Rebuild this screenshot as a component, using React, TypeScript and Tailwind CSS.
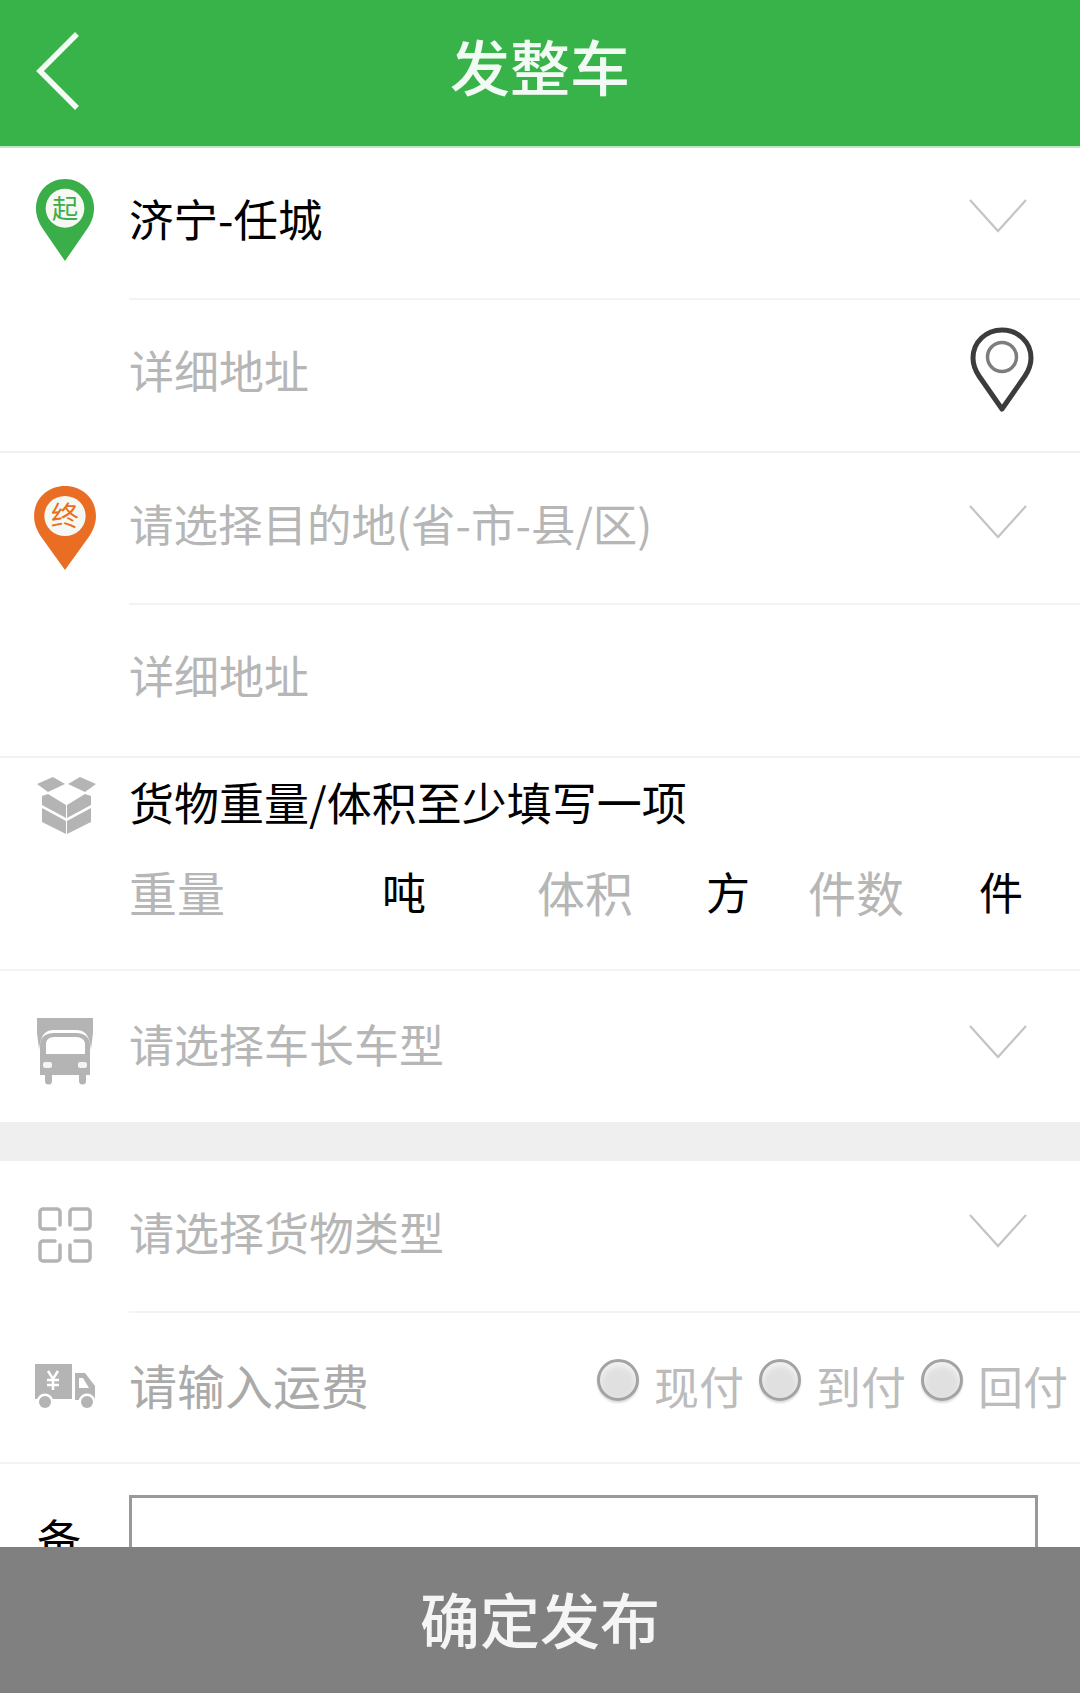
import type { ReactNode } from "react";

const FONT = "font-['Noto_Sans_CJK_SC','Noto_Sans',sans-serif]";

function Chevron() {
  return (
    <svg width="60" height="36" viewBox="0 0 60 36" className="shrink-0" fill="none">
      <path d="M2 2 L30 33 L58 2" stroke="#c4c4c4" strokeWidth="2.2" />
    </svg>
  );
}

function OriginPin({ color, label, wide = false }: { color: string; label: string; wide?: boolean }) {
  return (
    <svg width={wide ? 64 : 60} height={wide ? 86 : 84} viewBox="0 0 62 86" preserveAspectRatio="none">
      <path
        d="M31 1C14 1 1 14 1 31c0 8 3 15 7 21l23 33 23-33c4-6 7-13 7-21C61 14 48 1 31 1z"
        fill={color}
      />
      <circle cx="31" cy="31" r="20" fill="#f6f8f3" />
      <text x="31" y="41" textAnchor="middle" fontSize="27" fill={color} fontFamily="'Noto Sans CJK SC',sans-serif">
        {label}
      </text>
    </svg>
  );
}

function LocationPin() {
  return (
    <svg width="66" height="88" viewBox="0 0 66 88" fill="none">
      <path
        d="M33 4C17 4 4 16 4 32c0 7 2 12 6 18l23 33 23-33c4-6 6-11 6-18C62 16 49 4 33 4z"
        stroke="#3c3c3c"
        strokeWidth="5"
        strokeLinejoin="round"
      />
      <circle cx="33" cy="31" r="14.5" stroke="#7d7d7d" strokeWidth="3.5" />
    </svg>
  );
}

function BoxIcon() {
  return (
    <svg width="59" height="58" viewBox="0 0 59 58" fill="#b4b4b4">
      <path d="M0 8 16 1l12 7-17 8z" />
      <path d="M59 8 43 1 31 8l17 8z" />
      <path d="M5 20l6-2 18 11v13L5 29z" />
      <path d="M54 20l-6-2-18 11v13l24-13z" />
      <path d="M5 32l24 13v13L5 46z" />
      <path d="M54 32 30 45v13l24-12z" />
    </svg>
  );
}

function TruckIcon() {
  return (
    <svg width="56" height="68" viewBox="0 0 56 68" fill="#b4b4b4">
      <path d="M0 1h56v15l-2 16H2L0 16z" />
      <path d="M2 34C3 16 10 13 17 13h22c7 0 14 3 15 21z" fill="#fff" />
      <path d="M3 58V28c0-8 6-12 14-12h22c8 0 14 4 14 12v30h-4v6a3.500 3.500 0 0 1-7 0v-6H15v6a3.500 3.500 0 0 1-7 0v-6z" />
      <path d="M9 27c0-4 3-7 8-7h22c5 0 9 3 9 7v10H9z" fill="#fff" />
      <rect x="6" y="45" width="9" height="6" rx="2" fill="#f4f4f4" />
      <rect x="41" y="45" width="9" height="6" rx="2" fill="#f4f4f4" />
    </svg>
  );
}

function GridIcon() {
  return (
    <svg width="54" height="56" viewBox="0 0 54 56" fill="none" stroke="#b4b4b4" strokeWidth="3.500" strokeLinecap="round">
      <path d="M22 18V5a3 3 0 0 0-3-3H5a3 3 0 0 0-3 3v14a3 3 0 0 0 3 3h12" />
      <path d="M32 18V5a3 3 0 0 1 3-3h14a3 3 0 0 1 3 3v14a3 3 0 0 1-3 3H37" />
      <path d="M22 38v13a3 3 0 0 1-3 3H5a3 3 0 0 1-3-3V37a3 3 0 0 1 3-3h12" />
      <path d="M32 38v13a3 3 0 0 0 3 3h14a3 3 0 0 0 3-3V37a3 3 0 0 0-3-3H37" />
    </svg>
  );
}

function FreightIcon() {
  return (
    <svg width="60" height="46" viewBox="0 0 60 46" fill="#b4b4b4">
      <path d="M0 0h37v35H0z" />
      <path d="M40 9h10l10 13v14H40zM44 14v10h10l-6-10z" fillRule="evenodd" />
      <circle cx="10" cy="38" r="8.500" fill="#fff" />
      <circle cx="52" cy="38" r="8.500" fill="#fff" />
      <circle cx="10" cy="38" r="6" />
      <circle cx="52" cy="38" r="6" />
      <path d="M13 7l5 8 5-8M18 15v11M12 16h12M12 21h12" stroke="#fff" strokeWidth="2.500" fill="none" />
    </svg>
  );
}

function Radio() {
  return (
    <span className="w-[42px] h-[42px] shrink-0 rounded-full border-[3px] border-[#a3a3a3] bg-[#e0e0e0] shadow-[inset_0_4px_6px_#f4f4f4,0_2px_2px_#dcdcdc]" />
  );
}

function Row({
  icon,
  children,
  right,
  textShift = "",
}: {
  icon?: ReactNode;
  children: ReactNode;
  right?: ReactNode;
  textShift?: string;
}) {
  return (
    <div className="flex h-[152px]">
      <div className="w-[129px] shrink-0 flex justify-center pl-[1px] pt-[30px]">{icon}</div>
      <div className="flex-1 min-w-0 flex items-center justify-between pb-[4px] border-b-2 border-[#f3f3f3]">
        <div className={textShift}>{children}</div>
        {right}
      </div>
    </div>
  );
}

function Hint({ children }: { children: ReactNode }) {
  return <span className="text-[45px] leading-none text-[#b6b6b6] whitespace-nowrap">{children}</span>;
}

function PayOption({ label }: { label: string }) {
  return (
    <div className="flex w-[162px] shrink-0">
      <Radio />
      <span className="ml-[15px] mt-[4px] text-[45px] leading-none text-[#bcbcbc] whitespace-nowrap">{label}</span>
    </div>
  );
}

export default function App() {
  return (
    <div className={`relative w-[1080px] h-[1693px] overflow-hidden bg-white text-black ${FONT}`}>
      {/* Header */}
      <header className="relative flex h-[148px] items-center justify-center bg-[#37b34a] border-b-2 border-[#bfe6c5]">
        <svg width="44" height="78" viewBox="0 0 44 78" className="absolute left-[36px] top-[32px]" fill="none">
          <path d="M41 2 4 39l37 37" stroke="#f4fbf5" strokeWidth="5.500" />
        </svg>
        <h1 className="text-[60px] leading-none font-medium text-[#f2fbf3] -mt-[17px]">发整车</h1>
      </header>

      {/* Origin */}
      <Row icon={<OriginPin color="#3aae49" label="起" />} right={<div className="mr-[52px] -mt-[10px]"><Chevron /></div>} textShift="-mt-[4px]">
        <span className="text-[44.500px] leading-none">济宁-任城</span>
      </Row>
      <div className="flex h-[153px] items-center border-b-2 border-[#f1f1f1] pl-[129px] pr-[45px] pb-[12px] justify-between">
        <Hint>详细地址</Hint>
        <LocationPin />
      </div>

      {/* Destination */}
      <Row icon={<div className="pt-[2px]"><OriginPin color="#e96e24" label="终" wide /></div>} right={<div className="mr-[52px] -mt-[9px]"><Chevron /></div>} textShift="-mt-[4px]">
        <span className="text-[44.500px] leading-none text-[#b6b6b6] whitespace-nowrap">请选择目的地(省-市-县/区)</span>
      </Row>
      <div className="flex h-[153px] items-center border-b-2 border-[#f1f1f1] pl-[129px] pb-[12px]">
        <Hint>详细地址</Hint>
      </div>

      {/* Goods */}
      <div className="h-[213px] border-b-2 border-[#f3f3f3]">
        <div className="flex">
          <div className="w-[129px] shrink-0 pl-[37px] pt-[18px]">
            <BoxIcon />
          </div>
          <span className="mt-[21px] text-[45px] leading-none whitespace-nowrap">货物重量/体积至少填写一项</span>
        </div>
        <div className="flex items-center mt-[33px] pl-[129px] text-[44px] leading-none">
          <span className="w-[253px] text-[48px] text-[#b6b6b6]">重量</span>
          <span className="w-[155px]">吨</span>
          <span className="w-[169px] text-[48px] text-[#b6b6b6]">体积</span>
          <span className="w-[102px]">方</span>
          <span className="w-[171px] text-[48px] text-[#b6b6b6]">件数</span>
          <span>件</span>
        </div>
      </div>

      {/* Vehicle */}
      <div className="flex h-[151px] items-center pl-[37px] pr-[52px]">
        <div className="w-[92px] shrink-0 -mb-[8px]">
          <TruckIcon />
        </div>
        <div className="flex-1 -mt-[4px]">
          <Hint>请选择车长车型</Hint>
        </div>
        <div className="-mt-[10px]">
          <Chevron />
        </div>
      </div>

      <div className="h-[39px] bg-[#efefef]" />

      {/* Goods type */}
      <Row icon={<div className="pt-[16px]"><GridIcon /></div>} right={<div className="mr-[52px] -mt-[6px]"><Chevron /></div>} textShift="-mt-[4px]">
        <Hint>请选择货物类型</Hint>
      </Row>

      {/* Freight */}
      <div className="flex h-[151px] items-center border-b-2 border-[#f3f3f3] pl-[35px] pb-[4px]">
        <div className="w-[94px] shrink-0 mt-[2px]">
          <FreightIcon />
        </div>
        <span className="w-[468px] shrink-0 -mt-[4px] text-[48px] leading-none text-[#aaaaaa] whitespace-nowrap">请输入运费</span>
        <div className="flex shrink-0 -mt-[5px]">
          <PayOption label="现付" />
          <PayOption label="到付" />
          <PayOption label="回付" />
        </div>
      </div>

      {/* Remark */}
      <div className="flex pt-[31px]">
        <span className="w-[129px] shrink-0 pl-[37px] pt-[21px] text-[44px] leading-none">备</span>
        <div className="w-[909px] h-[120px] border-[3px] border-[#999999]" />
      </div>

      {/* Submit bar */}
      <button className="absolute left-0 right-0 bottom-0 h-[146px] bg-[#808080] text-[60px] font-medium leading-none text-[#f5f5f5]">
        <span className="relative -top-[2px]">确定发布</span>
      </button>
    </div>
  );
}
